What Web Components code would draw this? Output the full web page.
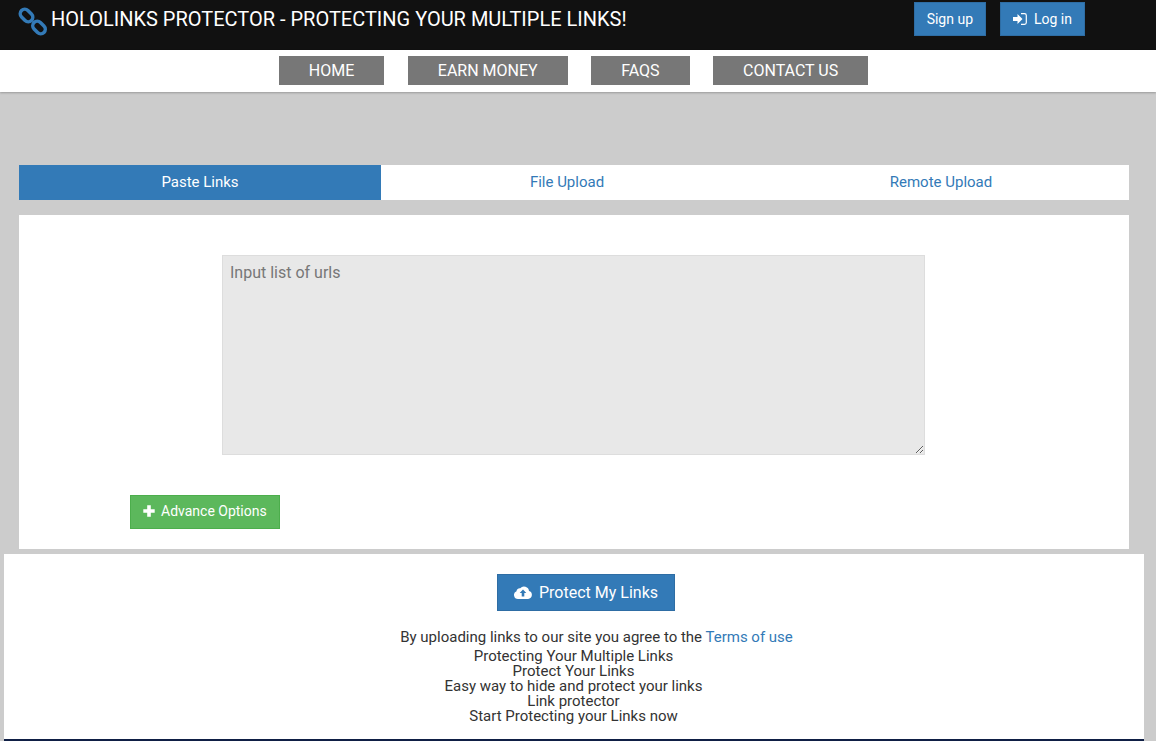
<!DOCTYPE html>
<html>
<head>
<meta charset="utf-8">
<title>Hololinks Protector</title>
<style>
    html, body { margin: 0; padding: 0; height: 100%; }
    body { background: #ccc; font-family: Roboto, "Liberation Sans", sans-serif; overflow: hidden; }
</style>
</head>
<body>
<hl-header>
    <hl-button slot="actions">Sign up</hl-button>
    <hl-button slot="actions" icon="login" class="login">Log in</hl-button>
</hl-header>
<hl-nav>
    <a>HOME</a>
    <a>EARN MONEY</a>
    <a>FAQS</a>
    <a>CONTACT US</a>
</hl-nav>
<hl-tabs></hl-tabs>
<hl-paste-panel></hl-paste-panel>
<hl-footer-panel>
    <div>Protecting Your Multiple Links</div>
    <div>Protect Your Links</div>
    <div>Easy way to hide and protect your links</div>
    <div>Link protector</div>
    <div>Start Protecting your Links now</div>
</hl-footer-panel>

<script>
const ICONS = {
    login: '<svg width="14" height="12" viewBox="0 0 14 12"><path fill="#fff" d="M0 4h4.500V1l5 5-5 5V8H0z"/><path fill="none" stroke="#fff" stroke-width="1.200" d="M8 .7h3.500a1.800 1.800 0 0 1 1.800 1.800v7a1.800 1.800 0 0 1-1.800 1.800H8"/></svg>',
    plus: '<svg width="12" height="12" viewBox="0 0 12 12"><path fill="#fff" d="M4.200.3h3.600v3.900h3.900v3.600H7.800v3.900H4.200V7.800H.3V4.200h3.900z"/></svg>',
    cloud: '<svg width="18" height="13" viewBox="0 0 18 13"><path fill="#fff" d="M4 13a4 4 0 0 1-1.500-7.700A3.200 3.200 0 0 1 6.200 2.200 5 5 0 0 1 15 5a4.100 4.100 0 0 1-.9 8z"/><path fill="#337ab7" d="M9 3.600l3.300 3.500H10.300v3.400H7.700V7.100H5.700z"/></svg>',
    link: '<svg width="32" height="32" viewBox="0 0 32 32"><g fill="none" stroke="#337ab7" stroke-width="3.500"><rect x="2.500" y="5" width="14" height="9" rx="4.500" transform="rotate(45 9.500 9.500)"/><rect x="15" y="17" width="14" height="9" rx="4.500" transform="rotate(45 22 21.500)"/></g></svg>'
};

customElements.define('hl-button', class HlButton extends HTMLElement {
    constructor() {
        super();
        const icon = this.getAttribute('icon');
        this.attachShadow({mode: 'open'}).innerHTML = `
            <style>
                :host {
                    background: #337ab7;
                    border: 1px solid #2e6da4;
                    box-sizing: border-box;
                    color: #fff;
                    display: inline-flex;
                    align-items: center;
                    justify-content: center;
                    font-size: 14px;
                    height: 34px;
                    padding: 0 12px;
                }
                svg { display: block; margin-right: 7px; }
            </style>
            ${icon ? ICONS[icon] : ''}<slot></slot>
        `;
    }
});

customElements.define('hl-header', class HlHeader extends HTMLElement {
    constructor() {
        super();
        this.attachShadow({mode: 'open'}).innerHTML = `
            <style>
                :host {
                    background: #111;
                    box-sizing: border-box;
                    color: #fff;
                    display: flex;
                    height: 50px;
                    padding-left: 17px;
                }
                .logo { margin-top: 6px; height: 32px; }
                h1 {
                    font-size: 20px;
                    font-weight: 400;
                    line-height: 21px;
                    margin: 9px 0 0 2px;
                }
                .actions {
                    display: flex;
                    gap: 14px;
                    margin-left: auto;
                    margin-right: 71px;
                    padding-top: 2px;
                }
            </style>
            <div class="logo">${ICONS.link}</div>
            <h1>HOLOLINKS PROTECTOR - PROTECTING YOUR MULTIPLE LINKS!</h1>
            <div class="actions"><slot name="actions"></slot></div>
        `;
    }
});

customElements.define('hl-nav', class HlNav extends HTMLElement {
    constructor() {
        super();
        this.attachShadow({mode: 'open'}).innerHTML = `
            <style>
                :host {
                    background: #fff;
                    box-shadow: 0 1px 2px rgba(0,0,0,.25);
                    display: flex;
                    gap: 23.500px;
                    height: 42px;
                    justify-content: center;
                    padding: 6px 9px 0 0;
                    box-sizing: border-box;
                }
                ::slotted(a) {
                    background: #777;
                    color: #fff;
                    font-size: 16px;
                    height: 29px;
                    line-height: 29px;
                    padding: 0 30px;
                }
            </style>
            <slot></slot>
        `;
    }
});

customElements.define('hl-tabs', class HlTabs extends HTMLElement {
    constructor() {
        super();
        this.attachShadow({mode: 'open'}).innerHTML = `
            <style>
                :host {
                    background: #fff;
                    display: grid;
                    font-size: 15px;
                    grid-template-columns: 362px 372px 1fr;
                    height: 35px;
                    line-height: 35px;
                    margin: 73px 27px 0 19px;
                    text-align: center;
                }
                div { color: #337ab7; }
                .active { background: #337ab7; color: #fff; }
            </style>
            <div class="active">Paste Links</div>
            <div>File Upload</div>
            <div>Remote Upload</div>
        `;
    }
});

customElements.define('hl-paste-panel', class HlPastePanel extends HTMLElement {
    constructor() {
        super();
        this.attachShadow({mode: 'open'}).innerHTML = `
            <style>
                :host {
                    background: #fff;
                    box-sizing: border-box;
                    display: block;
                    height: 334px;
                    margin: 15px 27px 0 19px;
                    padding: 40px 0 0 111px;
                }
                textarea {
                    background: #e8e8e8;
                    border: 1px solid #ddd;
                    box-sizing: border-box;
                    color: #555;
                    display: block;
                    font: 16px/22px Roboto, "Liberation Sans", sans-serif;
                    height: 200px;
                    margin: 0 0 40px 92px;
                    outline: 0;
                    padding: 6px 7px;
                    width: 703px;
                }
                textarea::placeholder { color: #777; opacity: 1; }
                .advance {
                    align-items: center;
                    background: #5cb85c;
                    border: 1px solid #4cae4c;
                    box-sizing: border-box;
                    color: #fff;
                    display: inline-flex;
                    font-size: 14px;
                    height: 34px;
                    padding: 0 12px 2px;
                    width: 150px;
                }
                svg { display: block; margin-right: 6px; }
            </style>
            <textarea placeholder="Input list of urls"></textarea>
            <div class="advance">${ICONS.plus}Advance Options</div>
        `;
    }
});

customElements.define('hl-footer-panel', class HlFooterPanel extends HTMLElement {
    constructor() {
        super();
        this.attachShadow({mode: 'open'}).innerHTML = `
            <style>
                :host {
                    background: #fff;
                    border-bottom: 2px solid #0f1f45;
                    box-sizing: border-box;
                    color: #333;
                    display: block;
                    font-size: 15px;
                    height: 187px;
                    line-height: 15px;
                    margin: 5px 12px 0 4px;
                    padding-top: 20px;
                    text-align: center;
                }
                .protect {
                    align-items: center;
                    background: #337ab7;
                    border: 1px solid #2e6da4;
                    box-sizing: border-box;
                    color: #fff;
                    display: flex;
                    font-size: 16px;
                    height: 37px;
                    justify-content: center;
                    margin-left: 493px;
                    width: 178px;
                }
                .protect svg { display: block; margin-right: 7px; }
                .terms { line-height: 20px; margin: 16px 0 0 45px; padding-bottom: 2px; }
                .terms a { color: #337ab7; }
                .lines { line-height: 15px; margin-right: 1px; }
            </style>
            <div class="protect">${ICONS.cloud}Protect My Links</div>
            <div class="terms">By uploading links to our site you agree to the <a>Terms of use</a></div>
            <div class="lines"><slot></slot></div>
        `;
    }
});
</script>
</body>
</html>
